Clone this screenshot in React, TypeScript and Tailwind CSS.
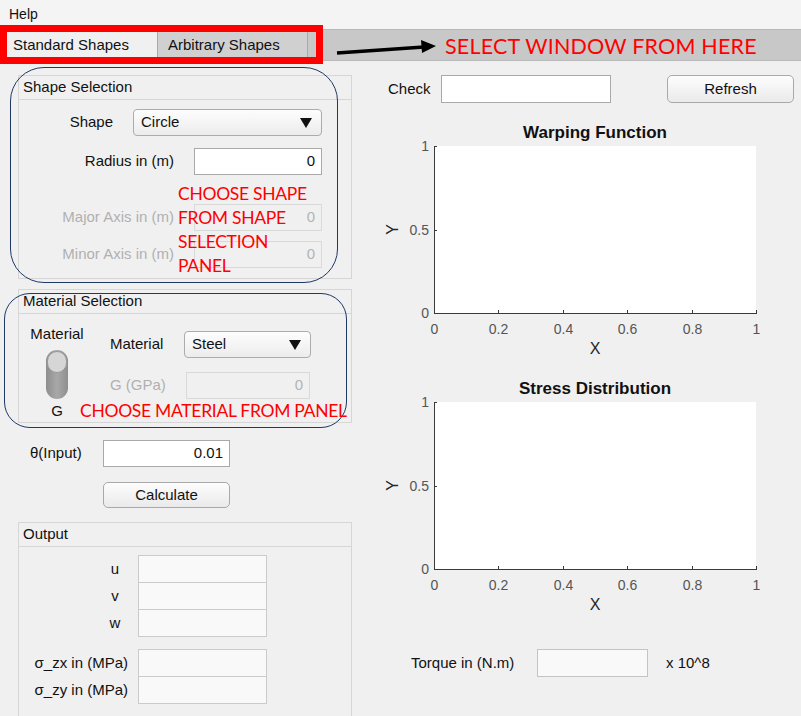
import React from "react"

const ui = { fontFamily: '"Liberation Sans", Arial, sans-serif' }
const note = { fontFamily: 'Lato, "Open Sans", sans-serif' }

function Caret() {
  return (
    <svg width="12" height="10" viewBox="0 0 12 10" className="shrink-0">
      <polygon points="0,0 12,0 6,10" fill="#111" />
    </svg>
  )
}

function Dropdown({ value, width }: { value: string; width: string }) {
  return (
    <div
      className={`${width} h-[27px] rounded-[4px] border border-[#acacac] bg-gradient-to-b from-[#fdfdfd] to-[#ececec] flex items-center justify-between pl-[7px] pr-[9px] text-[15px] text-[#111]`}
    >
      <span>{value}</span>
      <Caret />
    </div>
  )
}

function Field({ value, width, disabled }: { value?: string; width: string; disabled?: boolean }) {
  return (
    <div
      className={`${width} h-[27px] border flex items-center justify-end pr-[6px] text-[15px] ${
        disabled ? "bg-[#f0f0f0] border-[#d9d9d9] text-[#b4b4b4]" : "bg-white border-[#a9a9a9] text-[#111]"
      }`}
    >
      {value}
    </div>
  )
}

function Plot({ title }: { title: string }) {
  const xs = [0, 0.2, 0.4, 0.6, 0.8, 1]
  const left = 74
  const right = 396
  const top = 2
  const bottom = 169
  return (
    <div className="w-[441px]">
      <div className="ml-[74px] w-[322px] h-[22px] text-center text-[17px] font-bold leading-[22px] text-[#111]">
        {title}
      </div>
      <svg width="441" height="216" style={ui} className="overflow-visible">
        <rect x={left} y={top} width={right - left} height={bottom - top} fill="#fff" />
        <line x1={left + 0.5} y1={top} x2={left + 0.5} y2={bottom + 0.5} stroke="#3a3a3a" strokeWidth="1" />
        <line x1={left} y1={bottom + 0.5} x2={right + 1} y2={bottom + 0.5} stroke="#3a3a3a" strokeWidth="1" />
        {xs.map((v, i) => {
          const x = Math.round(left + (right - left) * v) + 0.5
          return (
            <g key={i}>
              <line x1={x} y1={bottom} x2={x} y2={bottom - 3} stroke="#3a3a3a" />
              <text x={x} y={bottom + 21} fontSize="14" textAnchor="middle" fill="#555">
                {String(v)}
              </text>
            </g>
          )
        })}
        {[
          { y: top, l: "1" },
          { y: (top + bottom) / 2, l: "0.5" },
          { y: bottom, l: "0" },
        ].map((t, i) => (
          <g key={i}>
            <line x1={left} y1={Math.round(t.y) + 0.5} x2={left + 3} y2={Math.round(t.y) + 0.5} stroke="#3a3a3a" />
            <text x={left - 5} y={t.y + 5} fontSize="14" textAnchor="end" fill="#555">
              {t.l}
            </text>
          </g>
        ))}
        <text x={235} y={bottom + 41} fontSize="16" textAnchor="middle" fill="#262626">
          X
        </text>
        <text
          x={0}
          y={0}
          fontSize="16"
          textAnchor="middle"
          fill="#262626"
          transform={`translate(38 ${(top + bottom) / 2}) rotate(-90)`}
        >
          Y
        </text>
      </svg>
    </div>
  )
}

export default function App() {
  return (
    <div className="relative w-[801px] h-[716px] overflow-hidden bg-[#f0f0f0] text-[15px] text-[#111]" style={ui}>
      {/* Menu bar */}
      <div className="h-[29px] bg-[#f4f4f4] pl-[9px] flex items-center text-[14px]">Help</div>

      {/* Tab strip */}
      <div className="h-[32px] bg-[#c8c8c8] border-y border-[#b9b9b9] flex">
        <div className="w-[157px] bg-[#f0f0f0] pl-[13px] flex items-center">Standard Shapes</div>
        <div className="w-[151px] bg-[#d0d0d0] border-l border-r border-[#a8a8a8] pl-[10px] flex items-center">
          Arbitrary Shapes
        </div>
      </div>

      <div className="flex">
        {/* Left column */}
        <div className="w-[360px] shrink-0 flex flex-col">
          {/* Shape Selection */}
          <div className="ml-[18px] mt-[14px] w-[334px] h-[204px] border border-[#d6d6d6]">
            <div className="h-[24px] border-b border-[#d6d6d6] pl-[4px] flex items-center">Shape Selection</div>
            <div className="flex items-center mt-[9px]">
              <div className="w-[94px] text-right">Shape</div>
              <div className="ml-[20px]">
                <Dropdown value="Circle" width="w-[189px]" />
              </div>
            </div>
            <div className="flex items-center mt-[12px]">
              <div className="w-[155px] text-right">Radius in (m)</div>
              <div className="ml-[20px]">
                <Field value="0" width="w-[128px]" />
              </div>
            </div>
            <div className="flex items-center mt-[29px]">
              <div className="w-[155px] text-right text-[#b0b0b0]">Major Axis in (m)</div>
              <div className="ml-[20px]">
                <Field value="0" width="w-[128px]" disabled />
              </div>
            </div>
            <div className="flex items-center mt-[10px]">
              <div className="w-[155px] text-right text-[#b0b0b0]">Minor Axis in (m)</div>
              <div className="ml-[20px]">
                <Field value="0" width="w-[128px]" disabled />
              </div>
            </div>
          </div>

          {/* Material Selection */}
          <div className="ml-[18px] mt-[10px] w-[334px] h-[134px] border border-[#d6d6d6]">
            <div className="h-[24px] border-b border-[#d6d6d6] pl-[4px] flex items-center">Material Selection</div>
            <div className="flex">
              <div className="w-[76px] flex flex-col items-center">
                <div className="mt-[11px] leading-[18px]">Material</div>
                <div className="mt-[7px] w-[22px] h-[49px] rounded-full bg-gradient-to-r from-[#8e8e8e] via-[#a8a8a8] to-[#8e8e8e] p-[1px]">
                  <div className="w-[20px] h-[22px] rounded-full bg-[#d6d6d6] border border-[#9a9a9a]" />
                </div>
                <div className="mt-[3px] leading-[18px]">G</div>
              </div>
              <div className="ml-[15px] flex flex-col">
                <div className="flex items-center mt-[17px]">
                  <div className="w-[74px]">Material</div>
                  <Dropdown value="Steel" width="w-[127px]" />
                </div>
                <div className="flex items-center mt-[14px]">
                  <div className="w-[76px] text-[#b0b0b0]">G (GPa)</div>
                  <Field value="0" width="w-[124px]" disabled />
                </div>
              </div>
            </div>
          </div>

          {/* Theta input */}
          <div className="flex items-center mt-[17px]">
            <div className="ml-[30px] w-[73px]">θ(Input)</div>
            <Field value="0.01" width="w-[127px]" />
          </div>
          <div className="ml-[103px] mt-[15px] w-[127px] h-[26px] rounded-[5px] border border-[#a9a9a9] bg-gradient-to-b from-[#fdfdfd] to-[#eaeaea] flex items-center justify-center">
            Calculate
          </div>

          {/* Output */}
          <div className="ml-[18px] mt-[14px] w-[334px] h-[200px] border border-[#d6d6d6]">
            <div className="h-[24px] border-b border-[#d6d6d6] pl-[4px] flex items-center">Output</div>
            <div className="mt-[8px] flex flex-col">
              {["u", "v", "w"].map((l, i) => (
                <div key={l} className={`flex items-center ${i > 0 ? "-mt-px" : ""}`}>
                  <div className="ml-[83px] w-[26px] text-center">{l}</div>
                  <div className="ml-[10px] w-[129px] h-[28px] bg-[#f9f9f9] border border-[#cbcbcb]" />
                </div>
              ))}
              <div className="h-[12px]" />
              {["σ_zx in (MPa)", "σ_zy in (MPa)"].map((l, i) => (
                <div key={l} className={`flex items-center ${i > 0 ? "-mt-px" : ""}`}>
                  <div className="w-[109px] text-right">{l}</div>
                  <div className="ml-[10px] w-[129px] h-[28px] bg-[#f9f9f9] border border-[#cbcbcb]" />
                </div>
              ))}
            </div>
          </div>
        </div>

        {/* Right column */}
        <div className="flex-1 flex flex-col">
          <div className="mt-[14px] h-[28px] flex items-center">
            <div className="ml-[28px] w-[53px]">Check</div>
            <div className="w-[170px] h-[28px] bg-white border border-[#a9a9a9]" />
            <div className="ml-[56px] w-[127px] h-[28px] rounded-[5px] border border-[#a9a9a9] bg-gradient-to-b from-[#fdfdfd] to-[#eaeaea] flex items-center justify-center">
              Refresh
            </div>
          </div>
          <div className="mt-[19px]">
            <Plot title="Warping Function" />
          </div>
          <div className="mt-[18px]">
            <Plot title="Stress Distribution" />
          </div>
          <div className="mt-[33px] h-[28px] flex items-center">
            <div className="ml-[51px] w-[126px]">Torque in (N.m)</div>
            <div className="w-[111px] h-[28px] bg-[#f9f9f9] border border-[#c4c4c4]" />
            <div className="ml-[18px]">x 10^8</div>
          </div>
        </div>
      </div>

      {/* Annotations */}
      <div className="absolute left-0 top-[25px] w-[323px] h-[39px] border-[7px] border-[#ff0000]" />
      <svg className="absolute left-0 top-0" width="801" height="70">
        <line x1="337" y1="53" x2="424" y2="47" stroke="#000" strokeWidth="3.5" />
        <polygon points="421,40 436,46 422,53" fill="#000" />
      </svg>
      <div
        className="absolute left-[445px] top-[31px] text-[21.5px] tracking-[0.2px] leading-[30px] text-[#ff0000]"
        style={note}
      >
        SELECT WINDOW FROM HERE
      </div>
      <div className="absolute left-[10px] top-[67px] w-[328px] h-[216px] rounded-[34px] border-[1.5px] border-[#203864]" />
      <div className="absolute left-[4px] top-[293px] w-[343px] h-[135px] rounded-[26px] border-[1.5px] border-[#203864]" />
      <div
        className="absolute left-[178px] top-[182px] text-[17.5px] tracking-[-0.3px] leading-[24px] text-[#ff0000]"
        style={note}
      >
        CHOOSE SHAPE
        <br />
        FROM SHAPE
        <br />
        SELECTION
        <br />
        PANEL
      </div>
      <div
        className="absolute left-[80px] top-[399px] text-[17.5px] tracking-[-0.3px] leading-[24px] text-[#ff0000]"
        style={note}
      >
        CHOOSE MATERIAL FROM PANEL
      </div>
    </div>
  )
}
